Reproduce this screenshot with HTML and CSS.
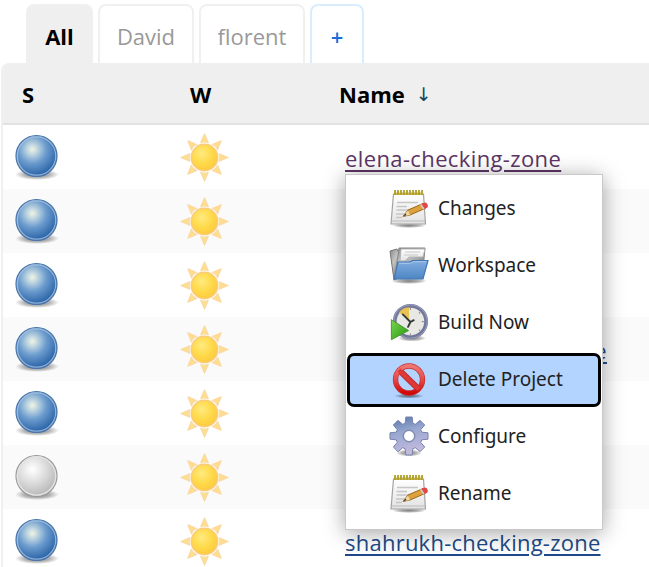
FILE: index.html
```html
<!DOCTYPE html>
<html lang="en">
<head>
<meta charset="utf-8">
<title>Projects</title>
<link rel="stylesheet" href="styles.css">
</head>
<body>
<svg class="defs" width="0" height="0" aria-hidden="true">
  <defs>
    <radialGradient id="blue" cx=".4" cy=".34" r=".65"><stop offset="0" stop-color="#f2f4df"/><stop offset=".18" stop-color="#c3d8e2"/><stop offset=".52" stop-color="#6c9cce"/><stop offset="1" stop-color="#2a63a7"/></radialGradient>
    <radialGradient id="grey" cx=".4" cy=".34" r=".68"><stop offset="0" stop-color="#fff"/><stop offset=".45" stop-color="#dfdfdf"/><stop offset="1" stop-color="#b5b5b5"/></radialGradient>
    <radialGradient id="shade"><stop offset="0" stop-color="#000" stop-opacity=".5"/><stop offset=".6" stop-color="#000" stop-opacity=".28"/><stop offset="1" stop-color="#000" stop-opacity="0"/></radialGradient>
    <radialGradient id="sunfill" cx=".4" cy=".35" r=".7"><stop offset="0" stop-color="#ffeb82"/><stop offset=".5" stop-color="#ffdb4d"/><stop offset="1" stop-color="#fdc83c"/></radialGradient>
    <linearGradient id="paper" x2="0" y2="1"><stop offset="0" stop-color="#fff"/><stop offset="1" stop-color="#e2e2e2"/></linearGradient>
    <linearGradient id="folder" x2="0" y2="1"><stop offset="0" stop-color="#82ade0"/><stop offset="1" stop-color="#4d86c4"/></linearGradient>
    <linearGradient id="steel" x2=".6" y2="1"><stop offset="0" stop-color="#888"/><stop offset=".5" stop-color="#c5c5c5"/><stop offset="1" stop-color="#777"/></linearGradient>
    <linearGradient id="red" x2="0" y2="1"><stop offset="0" stop-color="#ef7771"/><stop offset=".5" stop-color="#e64b48"/><stop offset="1" stop-color="#cf0808"/></linearGradient>
    <linearGradient id="gear" x2=".25" y2="1"><stop offset="0" stop-color="#5675aa"/><stop offset=".45" stop-color="#98a7d0"/><stop offset="1" stop-color="#c4badf"/></linearGradient>
    <linearGradient id="play" x2="1" y2="1"><stop offset="0" stop-color="#7bd554"/><stop offset="1" stop-color="#249709"/></linearGradient>
  </defs>
  <symbol id="ball" viewBox="0 0 46 48">
    <ellipse cx="23" cy="41.5" rx="22" ry="5.5" fill="url(#shade)"/>
    <circle cx="22.5" cy="23" r="20.5" fill="url(#blue)" stroke="#4876ac" stroke-width="1.2"/>
    <circle cx="22.5" cy="23" r="19.2" fill="none" stroke="#a8c4e2" stroke-width="1.2" opacity=".8"/>
  </symbol>
  <symbol id="ball-grey" viewBox="0 0 46 48">
    <ellipse cx="23" cy="41.5" rx="22" ry="5.5" fill="url(#shade)"/>
    <circle cx="22.5" cy="23" r="20.5" fill="url(#grey)" stroke="#999" stroke-width="1.2"/>
    <circle cx="22.5" cy="23" r="19.2" fill="none" stroke="#e4e4e4" stroke-width="1.3"/>
  </symbol>
  <symbol id="sun" viewBox="-25 -25 50 50">
    <g fill="#ffdf85" stroke="#fad9a6" stroke-width="1.3" stroke-linejoin="round">
      <path id="ray" d="M0-24L3.8-15Q0-17-3.8-15Z"/>
      <use href="#ray" transform="rotate(45)"/><use href="#ray" transform="rotate(90)"/><use href="#ray" transform="rotate(135)"/><use href="#ray" transform="rotate(180)"/><use href="#ray" transform="rotate(225)"/><use href="#ray" transform="rotate(270)"/><use href="#ray" transform="rotate(315)"/>
    </g>
    <circle r="13.5" fill="url(#sunfill)" stroke="#f9cb7c" stroke-width="1.5"/>
  </symbol>
  <symbol id="note" viewBox="0 0 40 40">
    <ellipse cx="20" cy="36.5" rx="17" ry="2.5" fill="url(#shade)"/>
    <path d="M4.5 5H34.500L36.500 35H2Z" fill="url(#paper)" stroke="#a4a49f" stroke-width="1.2"/>
    <path d="M3 32H36" stroke="#bbb"/>
    <path d="M8 13.500H29M7.500 17.500H18M7.500 21H24M7 25H16M7 28.500H13" stroke="#c6c6c6" stroke-width="1.5"/>
    <path d="M5 3.500H33V6H5Z" fill="#c5b653"/>
    <path d="M6 1V6M9 1V6M12 1V6M15 1V6M18 1V6M21 1V6M24 1V6M27 1V6M30 1V6M33 1V6" stroke="#b09f28" stroke-width="1.8"/>
    <path d="M14 27.500L19 21 34 14.500 37 19 21 26Z" fill="#dda23e" stroke="#9c681b"/>
    <path d="M14 27.500L19 21.500 21 26Z" fill="#ecd7aa"/><path d="M14 27.500l2.500-3 1 1.800z" fill="#443a2b"/>
    <path d="M32 15.200l2.500-1.300q3-1 4 1.600t-1 3.600L35 20Z" fill="#e34549"/><path d="M31 15.700l1.500-.7 3 4.600-1.500.8z" fill="#d3cdbd"/>
  </symbol>
  <symbol id="workspace" viewBox="0 0 40 40">
    <ellipse cx="20" cy="35" rx="18" ry="3" fill="url(#shade)"/>
    <path d="M1 5L8 3 10 7V32L5 34Z" fill="url(#steel)" stroke="#777"/>
    <path d="M10 2H36L34 24H7Z" fill="url(#steel)" stroke="#858585"/>
    <path d="M12 3H36L34 11H20L16 15H11Z" fill="url(#paper)" stroke="#aaa" stroke-width=".8"/>
    <path d="M16 6H31M15 9H29" stroke="#c9c9c9" stroke-width="1.2"/>
    <path d="M9 16H21L24 14.500H39L34 33H5Z" fill="url(#folder)" stroke="#4378b4" stroke-width="1.200"/>
    <path d="M10 17.300H21.500L24.500 15.700H37" fill="none" stroke="#a8c9ed"/>
  </symbol>
  <symbol id="build" viewBox="0 0 42 42">
    <ellipse cx="24" cy="37" rx="15" ry="3.5" fill="url(#shade)"/>
    <circle cx="22.500" cy="19.500" r="16.500" fill="#e8e9e4" stroke="#73789b" stroke-width="4"/>
    <circle cx="22.500" cy="19.500" r="17.500" fill="none" stroke="#9ea2c0" stroke-width="1"/>
    <path d="M21 18L10.500 10Q14 5 21 4.500Z" fill="#e8c353"/>
    <path d="M22.500 20L14.500 12M22.500 20L26 18M22.500 20L20 25" stroke="#383838" stroke-width="2" stroke-linecap="round"/>
    <path d="M22.500 5v2M36.500 19.500h-2M22.500 34v-2M32.500 10l-1 1M32.500 29l-1-1" stroke="#888" stroke-width="1.200"/>
    <path d="M2.500 17.500V38.500L20.500 29Z" fill="url(#play)" stroke="#459629" stroke-width="1"/>
  </symbol>
  <symbol id="delete" viewBox="0 0 40 40">
    <ellipse cx="20" cy="36" rx="15" ry="2.500" fill="url(#shade)"/>
    <g fill="none"><path d="M9.500 9.500L30.500 30" stroke="#b92c30" stroke-width="6"/><circle cx="20" cy="19.500" r="13.500" stroke="#c33034" stroke-width="5.400"/>
    <circle cx="20" cy="19.500" r="13.500" stroke="url(#red)" stroke-width="4"/><path d="M10 10L30 29.500" stroke="#df3837" stroke-width="4.400"/></g>
  </symbol>
  <symbol id="configure" viewBox="-20 -20 40 42">
    <ellipse cy="17" rx="13" ry="3.500" fill="url(#shade)"/>
    <path fill-rule="evenodd" fill="url(#gear)" stroke="#7984aa" stroke-width="1" stroke-linejoin="round" d="M-3.200-19H3.200L3.800-12.800 6.300-11.700 11-15.700 15.700-11 11.700-6.300 12.800-3.800 19-3.200V3.200L12.800 3.800 11.700 6.300 15.700 11 11 15.700 6.300 11.700 3.800 12.800 3.200 19H-3.200L-3.800 12.800-6.300 11.700-11 15.700-15.700 11-11.700 6.300-12.800 3.800-19 3.200V-3.200L-12.800-3.800-11.700-6.300-15.700-11-11-15.700-6.300-11.700-3.800-12.800ZM-5.500 0A5.500 5.500 0 1 0 5.500 0A5.500 5.500 0 1 0-5.500 0Z"/>
    <circle r="6" fill="none" stroke="#7e8bb0"/>
  </symbol>
</svg>

<nav class="tabs">
  <a class="tab active">All</a>
  <a class="tab david">David</a>
  <a class="tab florent">florent</a>
  <a class="tab add">+</a>
</nav>

<main class="projects">
  <div class="row head"><span>S</span><span>W</span><span class="name">Name <i>↓</i></span></div>
  <div class="row">
    <svg class="ball"><use href="#ball"/></svg><svg class="sun"><use href="#sun"/></svg>
    <div class="cell"><a class="link visited">elena-checking-zone</a>
      <div class="menu">
        <div class="item"><svg><use href="#note"/></svg><span>Changes</span></div>
        <div class="item"><svg><use href="#workspace"/></svg><span>Workspace</span></div>
        <div class="item"><svg><use href="#build"/></svg><span>Build Now</span></div>
        <div class="item selected"><svg><use href="#delete"/></svg><span>Delete Project</span></div>
        <div class="item"><svg><use href="#configure"/></svg><span>Configure</span></div>
        <div class="item"><svg><use href="#note"/></svg><span>Rename</span></div>
      </div>
    </div>
  </div>
  <div class="row"><svg class="ball"><use href="#ball"/></svg><svg class="sun"><use href="#sun"/></svg></div>
  <div class="row"><svg class="ball"><use href="#ball"/></svg><svg class="sun"><use href="#sun"/></svg></div>
  <div class="row"><svg class="ball"><use href="#ball"/></svg><svg class="sun"><use href="#sun"/></svg><div class="cell covered"><a class="link">e</a></div></div>
  <div class="row"><svg class="ball"><use href="#ball"/></svg><svg class="sun"><use href="#sun"/></svg></div>
  <div class="row"><svg class="ball"><use href="#ball-grey"/></svg><svg class="sun"><use href="#sun"/></svg></div>
  <div class="row"><svg class="ball"><use href="#ball"/></svg><svg class="sun"><use href="#sun"/></svg><div class="cell"><a class="link last">shahrukh-checking-zone</a></div></div>
</main>
</body>
</html>
```
FILE: styles.css
```css
* { box-sizing: border-box; }
body { margin: 0; width: 649px; height: 567px; overflow: hidden; background: #fff; font-family: "Open Sans", "Noto Sans", sans-serif; font-size: 22px; color: #000; }
.defs { position: absolute; }
svg { display: block; flex: none; }

.tabs { display: flex; gap: 5px; height: 63px; padding: 4px 0 0 26px; }
.tab { display: flex; align-items: center; justify-content: center; height: 59px; border: 2px solid #f0f0f0; border-bottom: 0; border-radius: 8px 8px 0 0; color: #999; white-space: nowrap; }
.tab { padding-top: 2px; }
.active { width: 67px; background: #efefef; color: #000; font-weight: 700; }
.david { width: 96px; }
.florent { width: 106px; }
.add { width: 54px; border-color: #d9edff; color: #1b6cd8; font-weight: 600; }

.projects { margin-left: 1px; border-left: 2px solid #f0f0f0; border-top-left-radius: 8px; }
.row { display: grid; grid-template-columns: 171px 155px 1fr; align-items: center; height: 64px; background: #fff; }
.row:nth-child(odd) { background: #fafafa; }
.row.head { height: 62px; padding: 2px 0 0 19px; grid-template-columns: 168px 149px 1fr; background: #efefef; border-bottom: 2px solid #e2e2e2; border-top-left-radius: 6px; font-weight: 700; }
.name { display: flex; align-items: center; gap: 11px; }
.name i { font: 400 19px/20px "DejaVu Sans", sans-serif; color: #17465f; }
.ball { width: 46px; height: 48px; margin-left: 11px; }
.sun { width: 49px; height: 49px; margin-left: 6px; }

.cell { position: relative; margin-left: 16px; padding-top: 1px; line-height: 30px; }
.link { color: #204a87; text-decoration: underline; text-decoration-thickness: 2px; text-underline-offset: 3px; letter-spacing: .38px; white-space: nowrap; }
.last { letter-spacing: .24px; }
.visited { color: #5c3566; }
.covered { width: 262px; text-align: right; }

.menu { position: absolute; z-index: 2; left: 0; top: 32px; width: 258px; height: 356px; padding: 6px 1px 2px; background: #fff; border: 1px solid #c9c9c9; box-shadow: 0 3px 20px rgba(0, 0, 0, .36); font-family: "Noto Sans", sans-serif; font-size: 19px; color: #222; }
.item { display: flex; align-items: center; gap: 9px; height: 57px; padding-left: 42px; line-height: 28px; white-space: nowrap; }
.item svg { width: 40px; height: 42px; }
.item span { margin-top: -2px; }
.selected { height: 54px; margin: 1px 0 2px; padding-left: 39px; background: #b3d4ff; border: 3px solid #000; border-radius: 7px; }
```
